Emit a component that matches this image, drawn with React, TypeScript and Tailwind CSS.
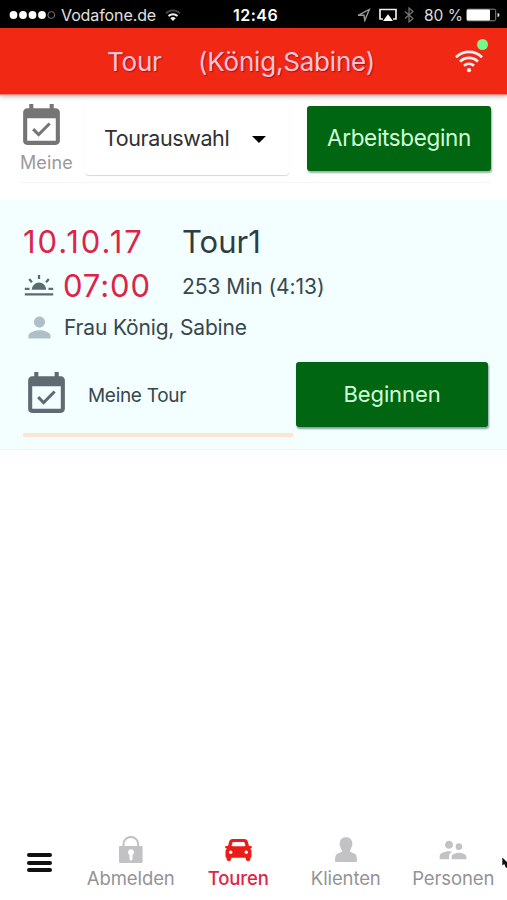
import type { ReactNode } from "react";
import { MdEventAvailable, MdPerson, MdSupervisorAccount } from "react-icons/md";

const LockIcon = () => (
  <svg width="26" height="28" viewBox="0 0 26 28" fill="currentColor" aria-hidden="true">
    <path d="M5.500 11V8.200a7.300 7.300 0 0 1 14.600 0V11" fill="none" stroke="currentColor" strokeWidth="2" />
    <path
      fillRule="evenodd"
      d="M2 10h21.6q1 0 1 1v15q0 1-1 1H2q-1 0-1-1V11q0-1 1-1zM13 13.3a3 3 0 0 0-1.500 5.600V23a1.500 1.500 0 0 0 3 0v-4.100A3 3 0 0 0 13 13.300z"
    />
  </svg>
);

const CarIcon = () => (
  <svg width="28" height="24" viewBox="-0.500 0 28 24" fill="currentColor" aria-hidden="true">
    <path
      fillRule="evenodd"
      d="M8.200 1h11.600c2 0 3 .9 3.500 2.500L24.500 8h1.700c1.500 0 1.500 2.400 0 2.400h-.7c1 .9 1.500 2 1.500 3.400v4.600c0 .7-.4 1.100-1 1.300v1.100a2.300 2.300 0 0 1-4.800 0v-1H6.800v1a2.300 2.300 0 0 1-4.800 0v-1.100c-.6-.2-1-.6-1-1.300v-4.600c0-1.400.5-2.500 1.500-3.400h-.7C.3 10.400.3 8 1.800 8h1.700l1.200-4.500C5.200 1.900 6.200 1 8.200 1zM9.300 4c-.9 0-1.300.3-1.500 1l-.6 2c-.2.800.1 1.200 1 1.200h11.600c.9 0 1.200-.4 1-1.200l-.6-2c-.2-.7-.6-1-1.500-1zM6.200 12.400a1.800 1.800 0 1 0 0 3.600 1.800 1.800 0 0 0 0-3.600zM21.800 12.400a1.800 1.800 0 1 0 0 3.600 1.800 1.800 0 0 0 0-3.600z"
    />
  </svg>
);

const ClientIcon = () => (
  <svg width="22" height="26" viewBox="0 0 22 26" fill="currentColor" aria-hidden="true">
    <path d="M11 .3c4 0 6.200 2.400 6.200 6.200.4 1.400.1 2.700-.6 3.300-.4 1.800-.8 2.700-1.400 3.500v1.200c1 1.200 3.100 1.400 4.600 2.200 1.700.9 2.200 3 2.200 8.300H.1c0-5.300.4-7.400 2.100-8.300 1.500-.8 3.700-1 4.700-2.200v-1.200c-.6-.8-1.100-1.700-1.500-3.500-.7-.6-1-1.900-.6-3.300C4.800 2.700 7 .3 11 .3z" />
  </svg>
);

const SunriseIcon = () => (
  <svg width="30" height="24" viewBox="0 0 30 24" fill="none" stroke="currentColor" strokeWidth="2.300" aria-hidden="true">
    <path d="M7.700 15.800a7.300 7.300 0 0 1 14.600 0z" fill="currentColor" stroke="none" />
    <path d="M15 1v4M5.200 5l2.700 3.200M24.800 5l-2.700 3.200M.8 14.800h4.700M24.500 14.800h4.700M.8 20.300h28.400" />
  </svg>
);

const WifiIcon = () => (
  <svg width="30" height="26" viewBox="0 0 30 26" fill="none" stroke="currentColor" strokeWidth="2.700" aria-hidden="true">
    <path d="M2 9.300a18.500 18.500 0 0 1 26 0M6 13.600a12.700 12.700 0 0 1 18 0M10 17.800a7.100 7.100 0 0 1 10 0" />
    <circle cx="15" cy="22.200" r="2.100" fill="currentColor" stroke="none" />
  </svg>
);

function StatusBar() {
  return (
    <div className="flex h-7 items-center bg-black pt-[2px] text-white">
      <svg width="48" height="10" viewBox="0 0 48 10" className="ml-[9px]" fill="currentColor" aria-hidden="true">
        <circle cx="4.500" cy="5" r="3.900" />
        <circle cx="14" cy="5" r="3.900" />
        <circle cx="23.500" cy="5" r="3.900" />
        <circle cx="33" cy="5" r="3.900" />
        <circle cx="42.300" cy="5" r="3.400" fill="none" stroke="#777" />
      </svg>
      <span className="ml-1 w-[96px] text-[16px] tracking-[-0.1px] text-[#e0e0e0]">Vodafone.de</span>
      <svg width="16" height="13" viewBox="0 0 16 13" className="ml-[8px]" fill="none" stroke="#eee" strokeWidth="1.900" aria-hidden="true">
        <path d="M1 4.200a10 10 0 0 1 14 0" stroke="#444" />
        <path d="M3.500 7a6.500 6.500 0 0 1 9 0" />
        <path d="M5.300 9.300a4 4 0 0 1 5.400 0L8 12z" fill="#eee" stroke="none" />
      </svg>
      <span className="ml-[52px] w-[46px] text-[16px] font-semibold tracking-[0.5px]">12:46</span>
      <svg width="14" height="14" viewBox="0 0 14 14" className="ml-[78px]" fill="none" stroke="#999" strokeWidth="1.400" aria-hidden="true">
        <path d="M1 7.300 12.300 1.500 7.800 12.500 7 7.300z" />
      </svg>
      <svg width="18" height="14" viewBox="0 0 18 14" className="ml-[8px]" fill="none" stroke="#eee" strokeWidth="1.700" aria-hidden="true">
        <path d="M4 11H1V1.500h16V11h-3" />
        <path d="M9 6.300 14 13H4z" fill="#fff" stroke="none" />
      </svg>
      <svg width="10" height="16" viewBox="0 0 10 16" className="ml-[7px]" fill="none" stroke="#777" strokeWidth="1.200" aria-hidden="true">
        <path d="m1 4.500 8 7L5 15V1l4 3.500-8 7" />
      </svg>
      <span className="ml-[10px] w-[39px] pt-px text-[15.5px] whitespace-nowrap text-[#ddd]">80 %</span>
      <svg width="34" height="14" viewBox="0 0 34 14" className="ml-[3px]" fill="none" aria-hidden="true">
        <rect x="0.700" y="1.200" width="29" height="11.600" rx="1.500" stroke="#888" />
        <rect x="1" y="1.500" width="23" height="11" rx="1" fill="#fff" />
        <path d="M31.500 5v4q2 0 2-2t-2-2z" fill="#ddd" />
      </svg>
    </div>
  );
}

function Header() {
  return (
    <header className="flex h-[67px] items-center border-b border-[#f48080] bg-[#f02814] text-[26px] text-[#ffc4d8] shadow-[0_1px_5px_rgba(0,0,0,0.35)]">
      <h1 className="flex tracking-[-0.2px] [text-shadow:1px_1px_1px_#b01010]">
        <span className="ml-[107px] w-[91px]">Tour</span>
        <span className="w-[256px] whitespace-nowrap">(König,Sabine)</span>
      </h1>
      <div className="relative text-[#fff0f4]">
        <WifiIcon />
        <span className="absolute -top-[9px] left-[23px] size-[11px] rounded-full bg-[#75f88c]" />
      </div>
    </header>
  );
}

function Toolbar() {
  return (
    <div className="h-[105px] pr-4 pl-5">
      <div className="flex h-[88px] border-b border-[#f5f5f5]">
        <div className="w-[62px] shrink-0 pt-[7px] text-[#757575]">
          <MdEventAvailable size={49} className="-ml-[3px]" />
          <p className="text-[18px] leading-6 tracking-[0.1px] text-[#9a9a9a]">Meine</p>
        </div>
        <button className="mt-[6px] ml-[3px] flex h-[74px] w-[204px] shrink-0 items-center rounded-sm text-left shadow-[0_1px_1px_rgba(0,0,0,0.16)]">
          <span className="ml-[19px] w-[148px] text-[21.5px] tracking-[-0.4px] text-[#303030]">Tourauswahl</span>
          <span className="mt-[2px] border-x-[7px] border-t-[7px] border-x-transparent border-t-black" />
        </button>
        <button className="mt-[11px] ml-[18px] h-[65px] w-[184px] shrink-0 rounded-[3px] bg-[#006611] pb-px text-[22.5px] tracking-[-0.35px] text-[#d2ffd8] shadow-[1px_2px_2px_rgba(0,60,30,0.4)]">
          Arbeitsbeginn
        </button>
      </div>
    </div>
  );
}

function TourCard() {
  return (
    <section className="h-[250px] border-b border-[#ebf3f4] bg-[#f2feff] pt-[24px] pl-[23px] text-[#39474b]">
      <div className="flex h-9 items-center text-[31px]">
        <span className="w-[159px] tracking-[1.9px] text-[#dd2448]">10.10.17</span>
        <h2 className="text-[#303d40]">Tour1</h2>
      </div>
      <div className="flex h-[52px] items-center">
        <span className="w-[40px] pl-px text-[#5b6b72]">
          <SunriseIcon />
        </span>
        <span className="w-[119px] text-[31px] tracking-[0.9px] text-[#dd2448]">07:00</span>
        <span className="pt-px text-[21px] tracking-[-0.05px]">253 Min (4:13)</span>
      </div>
      <div className="flex h-[30px] items-center pt-px">
        <MdPerson size={33} className="mr-[8px] shrink-0 text-[#b0bec8]" />
        <span className="text-[21px] tracking-[-0.17px]">Frau König, Sabine</span>
      </div>
      <div className="flex">
        <div className="mt-[20px] flex h-[75px] w-[270px] shrink-0 items-center border-b-4 border-[#fce6d0] pb-[6px]">
          <MdEventAvailable size={49} className="-ml-[1px] text-[#5f6a73]" />
          <span className="ml-[17px] pt-[3px] text-[19px] tracking-[-0.3px]">Meine Tour</span>
        </div>
        <button className="mt-[20px] ml-[3px] h-[65px] w-[192px] shrink-0 rounded-[3px] bg-[#006611] text-[22px] tracking-[-0.1px] text-[#d2ffd8] shadow-[1px_2px_2px_rgba(0,40,60,0.45)]">
          Beginnen
        </button>
      </div>
    </section>
  );
}

const TABS: { label: string; icon: ReactNode; active?: boolean }[] = [
  { label: "Abmelden", icon: <LockIcon /> },
  { label: "Touren", icon: <CarIcon />, active: true },
  { label: "Klienten", icon: <ClientIcon /> },
  { label: "Personen", icon: <MdSupervisorAccount size={32} /> },
];

function TabBar() {
  return (
    <nav className="relative flex h-[76px] pl-[27px]">
      <button className="mt-[29px] flex h-[19px] w-[50px] flex-col justify-between" aria-label="Menü">
        <span className="h-1 w-[25px] rounded-sm bg-[#101010]" />
        <span className="h-1 w-[25px] rounded-sm bg-[#101010]" />
        <span className="h-1 w-[25px] rounded-sm bg-[#101010]" />
      </button>
      {TABS.map(({ label, icon, active }) => (
        <div key={label} className="flex w-[107.5px] flex-col items-center pt-[10px]">
          <div className={`flex h-8 items-center ${active ? "text-[#ec1c18]" : "text-[#c2c2c4]"}`}>
            {icon}
          </div>
          <span className={`text-[18.5px] leading-6 tracking-[-0.1px] ${active ? "font-medium text-[#e02446]" : "text-[#939395]"}`}>
            {label}
          </span>
        </div>
      ))}
      <svg width="5" height="12" viewBox="0 0 5 12" className="absolute top-[33px] right-0" aria-hidden="true">
        <path d="M.3.500v8l2-1.500L4 11l1-.5V5z" fill="#111" />
      </svg>
    </nav>
  );
}

export default function App() {
  return (
    <main className="flex h-[900px] w-[507px] flex-col overflow-hidden bg-white font-['Inter',sans-serif]">
      <StatusBar />
      <Header />
      <Toolbar />
      <TourCard />
      <div className="flex-1" />
      <TabBar />
    </main>
  );
}
